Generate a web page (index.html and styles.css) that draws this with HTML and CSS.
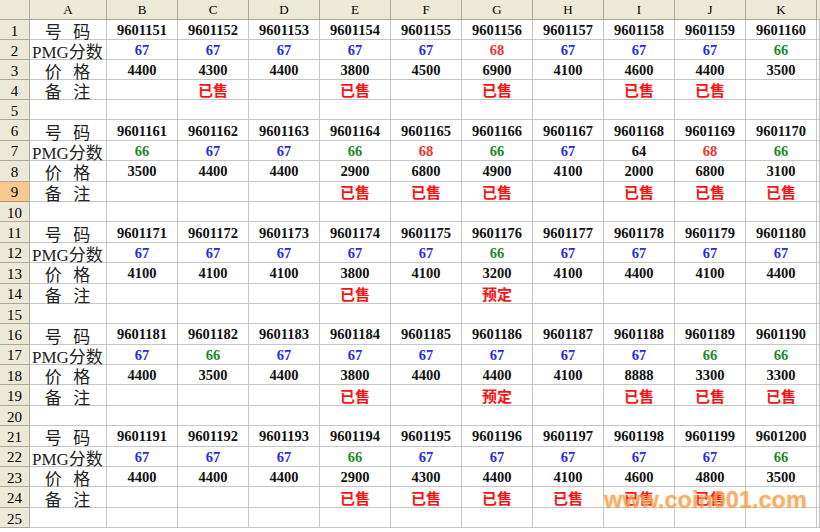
FILE: index.html
```html
<!DOCTYPE html>
<html lang="zh">
<head>
<meta charset="utf-8">
<title>Sheet</title>
<link rel="stylesheet" href="styles.css">
</head>
<body>
<div class="sheet">
  <div class="row"><div class="corner"></div><div class="h">A</div><div class="h">B</div><div class="h">C</div><div class="h">D</div><div class="h">E</div><div class="h">F</div><div class="h">G</div><div class="h">H</div><div class="h">I</div><div class="h">J</div><div class="h">K</div><div class="h last"></div></div>

  <div class="row"><div class="rh">1</div><div class="lab sp">号&nbsp;&nbsp;码</div><div class="c id">9601151</div><div class="c id">9601152</div><div class="c id">9601153</div><div class="c id">9601154</div><div class="c id">9601155</div><div class="c id">9601156</div><div class="c id">9601157</div><div class="c id">9601158</div><div class="c id">9601159</div><div class="c id">9601160</div><div class="c"></div></div>
  <div class="row"><div class="rh">2</div><div class="lab pmg">PMG分数</div><div class="c b">67</div><div class="c b">67</div><div class="c b">67</div><div class="c b">67</div><div class="c b">67</div><div class="c r">68</div><div class="c b">67</div><div class="c b">67</div><div class="c b">67</div><div class="c g">66</div><div class="c"></div></div>
  <div class="row"><div class="rh">3</div><div class="lab sp">价&nbsp;&nbsp;格</div><div class="c id">4400</div><div class="c id">4300</div><div class="c id">4400</div><div class="c id">3800</div><div class="c id">4500</div><div class="c id">6900</div><div class="c id">4100</div><div class="c id">4600</div><div class="c id">4400</div><div class="c id">3500</div><div class="c"></div></div>
  <div class="row"><div class="rh">4</div><div class="lab sp">备&nbsp;&nbsp;注</div><div class="c"></div><div class="c s">已售</div><div class="c"></div><div class="c s">已售</div><div class="c"></div><div class="c s">已售</div><div class="c"></div><div class="c s">已售</div><div class="c s">已售</div><div class="c"></div><div class="c"></div></div>
  <div class="row"><div class="rh">5</div><div class="lab"></div><div class="c"></div><div class="c"></div><div class="c"></div><div class="c"></div><div class="c"></div><div class="c"></div><div class="c"></div><div class="c"></div><div class="c"></div><div class="c"></div><div class="c"></div></div>

  <div class="row"><div class="rh">6</div><div class="lab sp">号&nbsp;&nbsp;码</div><div class="c id">9601161</div><div class="c id">9601162</div><div class="c id">9601163</div><div class="c id">9601164</div><div class="c id">9601165</div><div class="c id">9601166</div><div class="c id">9601167</div><div class="c id">9601168</div><div class="c id">9601169</div><div class="c id">9601170</div><div class="c"></div></div>
  <div class="row"><div class="rh">7</div><div class="lab pmg">PMG分数</div><div class="c g">66</div><div class="c b">67</div><div class="c b">67</div><div class="c g">66</div><div class="c r">68</div><div class="c g">66</div><div class="c b">67</div><div class="c id">64</div><div class="c r">68</div><div class="c g">66</div><div class="c"></div></div>
  <div class="row"><div class="rh">8</div><div class="lab sp">价&nbsp;&nbsp;格</div><div class="c id">3500</div><div class="c id">4400</div><div class="c id">4400</div><div class="c id">2900</div><div class="c id">6800</div><div class="c id">4900</div><div class="c id">4100</div><div class="c id">2000</div><div class="c id">6800</div><div class="c id">3100</div><div class="c"></div></div>
  <div class="row"><div class="rh sel">9</div><div class="lab sp">备&nbsp;&nbsp;注</div><div class="c"></div><div class="c"></div><div class="c"></div><div class="c s">已售</div><div class="c s">已售</div><div class="c s">已售</div><div class="c"></div><div class="c s">已售</div><div class="c s">已售</div><div class="c s">已售</div><div class="c"></div></div>
  <div class="row"><div class="rh">10</div><div class="lab"></div><div class="c"></div><div class="c"></div><div class="c"></div><div class="c"></div><div class="c"></div><div class="c"></div><div class="c"></div><div class="c"></div><div class="c"></div><div class="c"></div><div class="c"></div></div>

  <div class="row"><div class="rh">11</div><div class="lab sp">号&nbsp;&nbsp;码</div><div class="c id">9601171</div><div class="c id">9601172</div><div class="c id">9601173</div><div class="c id">9601174</div><div class="c id">9601175</div><div class="c id">9601176</div><div class="c id">9601177</div><div class="c id">9601178</div><div class="c id">9601179</div><div class="c id">9601180</div><div class="c"></div></div>
  <div class="row"><div class="rh">12</div><div class="lab pmg">PMG分数</div><div class="c b">67</div><div class="c b">67</div><div class="c b">67</div><div class="c b">67</div><div class="c b">67</div><div class="c g">66</div><div class="c b">67</div><div class="c b">67</div><div class="c b">67</div><div class="c b">67</div><div class="c"></div></div>
  <div class="row"><div class="rh">13</div><div class="lab sp">价&nbsp;&nbsp;格</div><div class="c id">4100</div><div class="c id">4100</div><div class="c id">4100</div><div class="c id">3800</div><div class="c id">4100</div><div class="c id">3200</div><div class="c id">4100</div><div class="c id">4400</div><div class="c id">4100</div><div class="c id">4400</div><div class="c"></div></div>
  <div class="row"><div class="rh">14</div><div class="lab sp">备&nbsp;&nbsp;注</div><div class="c"></div><div class="c"></div><div class="c"></div><div class="c s">已售</div><div class="c"></div><div class="c s">预定</div><div class="c"></div><div class="c"></div><div class="c"></div><div class="c"></div><div class="c"></div></div>
  <div class="row"><div class="rh">15</div><div class="lab"></div><div class="c"></div><div class="c"></div><div class="c"></div><div class="c"></div><div class="c"></div><div class="c"></div><div class="c"></div><div class="c"></div><div class="c"></div><div class="c"></div><div class="c"></div></div>

  <div class="row"><div class="rh">16</div><div class="lab sp">号&nbsp;&nbsp;码</div><div class="c id">9601181</div><div class="c id">9601182</div><div class="c id">9601183</div><div class="c id">9601184</div><div class="c id">9601185</div><div class="c id">9601186</div><div class="c id">9601187</div><div class="c id">9601188</div><div class="c id">9601189</div><div class="c id">9601190</div><div class="c"></div></div>
  <div class="row"><div class="rh">17</div><div class="lab pmg">PMG分数</div><div class="c b">67</div><div class="c g">66</div><div class="c b">67</div><div class="c b">67</div><div class="c b">67</div><div class="c b">67</div><div class="c b">67</div><div class="c b">67</div><div class="c g">66</div><div class="c g">66</div><div class="c"></div></div>
  <div class="row"><div class="rh">18</div><div class="lab sp">价&nbsp;&nbsp;格</div><div class="c id">4400</div><div class="c id">3500</div><div class="c id">4400</div><div class="c id">3800</div><div class="c id">4400</div><div class="c id">4400</div><div class="c id">4100</div><div class="c id">8888</div><div class="c id">3300</div><div class="c id">3300</div><div class="c"></div></div>
  <div class="row"><div class="rh">19</div><div class="lab sp">备&nbsp;&nbsp;注</div><div class="c"></div><div class="c"></div><div class="c"></div><div class="c s">已售</div><div class="c"></div><div class="c s">预定</div><div class="c"></div><div class="c s">已售</div><div class="c s">已售</div><div class="c s">已售</div><div class="c"></div></div>
  <div class="row"><div class="rh">20</div><div class="lab"></div><div class="c"></div><div class="c"></div><div class="c"></div><div class="c"></div><div class="c"></div><div class="c"></div><div class="c"></div><div class="c"></div><div class="c"></div><div class="c"></div><div class="c"></div></div>

  <div class="row"><div class="rh">21</div><div class="lab sp">号&nbsp;&nbsp;码</div><div class="c id">9601191</div><div class="c id">9601192</div><div class="c id">9601193</div><div class="c id">9601194</div><div class="c id">9601195</div><div class="c id">9601196</div><div class="c id">9601197</div><div class="c id">9601198</div><div class="c id">9601199</div><div class="c id">9601200</div><div class="c"></div></div>
  <div class="row"><div class="rh">22</div><div class="lab pmg">PMG分数</div><div class="c b">67</div><div class="c b">67</div><div class="c b">67</div><div class="c g">66</div><div class="c b">67</div><div class="c b">67</div><div class="c b">67</div><div class="c b">67</div><div class="c b">67</div><div class="c g">66</div><div class="c"></div></div>
  <div class="row"><div class="rh">23</div><div class="lab sp">价&nbsp;&nbsp;格</div><div class="c id">4400</div><div class="c id">4400</div><div class="c id">4400</div><div class="c id">2900</div><div class="c id">4300</div><div class="c id">4400</div><div class="c id">4100</div><div class="c id">4600</div><div class="c id">4800</div><div class="c id">3500</div><div class="c"></div></div>
  <div class="row"><div class="rh">24</div><div class="lab sp">备&nbsp;&nbsp;注</div><div class="c"></div><div class="c"></div><div class="c"></div><div class="c s">已售</div><div class="c s">已售</div><div class="c s">已售</div><div class="c s">已售</div><div class="c s">已售</div><div class="c s">已售</div><div class="c"></div><div class="c"></div></div>
  <div class="row"><div class="rh">25</div><div class="lab"></div><div class="c"></div><div class="c"></div><div class="c"></div><div class="c"></div><div class="c"></div><div class="c"></div><div class="c"></div><div class="c"></div><div class="c"></div><div class="c"></div><div class="c"></div></div>
</div>
<div class="watermark">www.coin001.com</div>
</body>
</html>
```
FILE: styles.css
```css
* { box-sizing: border-box; }
html, body { margin: 0; padding: 0; background: #fff; overflow: hidden; }
body { width: 820px; height: 532px; position: relative; }

.sheet {
  display: grid;
  grid-template-columns: 30px 77px repeat(10, 71px) 1fr;
  grid-template-rows: 20px repeat(4, 20px) repeat(21, 20.4px);
  width: 820px;
}
.row { display: contents; }

.corner, .h, .rh {
  background: #ece9d8;
  border-right: 1px solid #aca899;
  border-bottom: 1px solid #aca899;
  color: #000;
  font-family: "Liberation Serif", "DejaVu Serif", serif;
  display: flex;
  align-items: center;
  justify-content: center;
}
.h { font-size: 13px; padding-top: 1px; }
.rh { font-size: 15px; padding-top: 3px; }
.rh.sel { background: #f9c88f; border-bottom-color: #b0946a; }
.h.last { border-right: none; }

.lab, .c {
  border-right: 1px solid #c6c6c6;
  border-bottom: 1px solid #c6c6c6;
  display: flex;
  align-items: center;
  justify-content: center;
  white-space: nowrap;
  overflow: visible;
}
.lab {
  font-family: "Liberation Serif", "Noto Sans CJK SC", serif;
  font-size: 17px;
  color: #222;
  padding-top: 2px;
}
.lab.sp { letter-spacing: 1px; }
.lab.pmg { justify-content: flex-start; padding-left: 2px; letter-spacing: 0; }

.c {
  font-family: "Liberation Serif", "Times New Roman", serif;
  font-weight: bold;
  font-size: 14.5px;
  padding-top: 2px;
}
.id { color: #111; }
.b { color: #2a2ae6; }
.g { color: #1a8a2a; }
.r { color: #ee3333; }
.s {
  color: #ff1010;
  font-family: "Noto Sans CJK SC", sans-serif;
  font-size: 15px;
  font-weight: bold;
  padding-top: 0;
}

.watermark {
  position: absolute;
  left: 604px;
  top: 487px;
  font-family: "Liberation Sans", Arial, sans-serif;
  font-weight: bold;
  font-size: 23.5px;
  color: #f3a04c;
  opacity: 0.82;
  text-shadow: 0 0 2px rgba(255, 210, 150, 0.9);
  letter-spacing: 0;
  pointer-events: none;
}
```
